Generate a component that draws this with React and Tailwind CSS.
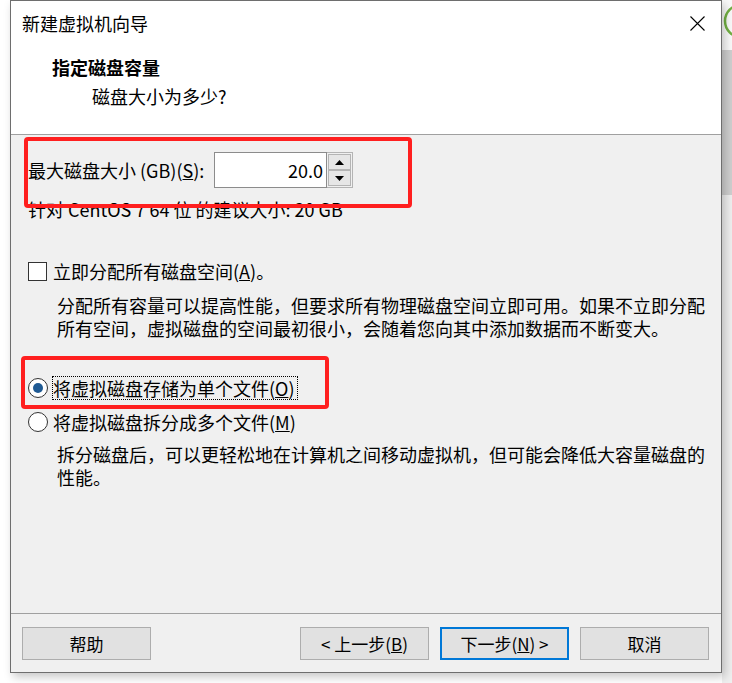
import React from 'react';

// 单选框
const Radio = ({ checked }) => (
  <span className="w-[20px] h-[20px] rounded-full border border-[#333333] bg-white flex items-center justify-center shrink-0">
    {checked && <span className="w-[10px] h-[10px] rounded-full bg-[#1f5a93]" />}
  </span>
);

const Btn = ({ children, primary }) => (
  <button
    type="button"
    className={
      primary
        ? 'w-[129px] h-[33px] bg-[#e1e1e1] border-2 border-[#0078d7] text-[17px] leading-none text-black'
        : 'w-[129px] h-[33px] bg-[#e1e1e1] border border-[#adadad] text-[17px] leading-none text-black'
    }
  >
    {children}
  </button>
);

const SpinArrow = ({ up }) => (
  <span className="flex-1 bg-[#e6e6e6] border border-[#b4b4b4] flex items-center justify-center">
    <svg width="9" height="5" viewBox="0 0 9 5">
      {up ? <path d="M0 5 L4.5 0 L9 5 Z" fill="#000" /> : <path d="M0 0 L4.5 5 L9 0 Z" fill="#000" />}
    </svg>
  </span>
);

export default function App() {
  return (
    <div className="relative w-[732px] h-[683px] bg-white overflow-hidden flex font-['Noto_Sans_CJK_SC',sans-serif] text-[18px] text-black">
      <div className="w-[10px] shrink-0" />

      {/* 对话框 */}
      <div className="relative z-10 w-[712px] h-[673px] shrink-0 border border-[#6e6e6e] bg-[#f0f0f0] flex flex-col shadow-[3px_4px_9px_rgba(0,0,0,0.22)]">
        {/* 头部 */}
        <div className="h-[133px] bg-white flex flex-col">
          <div className="flex items-center justify-between pl-[11px] pr-[16px] pt-[10px]">
            <span className="leading-[24px]">新建虚拟机向导</span>
            <svg width="15" height="15" viewBox="0 0 15 15">
              <path d="M0.5 0.5 L14.5 14.5 M14.5 0.5 L0.5 14.5" stroke="#000" strokeWidth="1.1" />
            </svg>
          </div>
          <p className="pl-[41px] mt-[20px] font-bold leading-[24px]">指定磁盘容量</p>
          <p className="pl-[81px] mt-[5px] leading-[24px]">磁盘大小为多少?</p>
        </div>
        <div className="h-px bg-[#a0a0a0]" />

        {/* 内容 */}
        <div className="flex-1 flex flex-col pl-[17px]">
          <div className="flex items-center mt-[17px]">
            <span className="leading-[24px] w-[186px]">
              最大磁盘大小 (GB)(<span className="underline">S</span>):
            </span>
            <div className="flex h-[36px]">
              <div className="w-[113px] bg-white border border-[#8c8c8c] flex items-center justify-end pr-[3px] leading-none">
                20.0
              </div>
              <div className="w-[26px] flex flex-col p-px border border-l-0 border-[#b4b4b4]">
                <SpinArrow up />
                <SpinArrow />
              </div>
            </div>
          </div>
          <p className="mt-[9px] leading-[24px]">针对 CentOS 7 64 位 的建议大小: 20 GB</p>

          <div className="flex items-center mt-[38px]">
            <span className="w-[19px] h-[19px] border border-[#333333] bg-white shrink-0" />
            <span className="ml-[6px] leading-[24px]">
              立即分配所有磁盘空间(<span className="underline">A</span>)。
            </span>
          </div>
          <div className="pl-[29px] mt-[11px] leading-[23px]">
            <p>分配所有容量可以提高性能，但要求所有物理磁盘空间立即可用。如果不立即分配</p>
            <p>所有空间，虚拟磁盘的空间最初很小，会随着您向其中添加数据而不断变大。</p>
          </div>

          <div className="flex items-center mt-[36px]">
            <Radio checked />
            <span className="ml-[4px] pr-[2px] border border-dotted border-black leading-[22px]">
              将虚拟磁盘存储为单个文件(<span className="underline">O</span>)
            </span>
          </div>
          <div className="flex items-center mt-[10px]">
            <Radio />
            <span className="ml-[5px] leading-[24px]">
              将虚拟磁盘拆分成多个文件(<span className="underline">M</span>)
            </span>
          </div>
          <div className="pl-[29px] mt-[9px] leading-[23px]">
            <p>拆分磁盘后，可以更轻松地在计算机之间移动虚拟机，但可能会降低大容量磁盘的</p>
            <p>性能。</p>
          </div>
        </div>

        {/* 底部按钮 */}
        <div className="h-px bg-[#a0a0a0]" />
        <div className="h-[58px] flex items-start pt-[13px] pl-[11px] pr-[12px]">
          <Btn>帮助</Btn>
          <div className="flex-1" />
          <div className="flex gap-[11px]">
            <Btn>&lt; 上一步(<span className="underline">B</span>)</Btn>
            <Btn primary>下一步(<span className="underline">N</span>) &gt;</Btn>
            <Btn>取消</Btn>
          </div>
        </div>
      </div>

      {/* 右侧背景 */}
      <div className="flex-1 flex flex-col">
        <div className="h-[50px] bg-[#fafafa]">
          <svg width="10" height="50" viewBox="0 0 10 50">
            <circle cx="19" cy="21" r="16" fill="none" stroke="#72b043" strokeWidth="2.5" />
          </svg>
        </div>
        <div className="h-[145px] bg-[#cfcfcf]" />
        <div className="flex-1 bg-[#efefef]" />
      </div>

      {/* 红色标注框 */}
      <div className="absolute z-20 left-[24px] top-[137px] w-[388px] h-[71px] border-4 border-[#ff1f1f] rounded-[4px]" />
      <div className="absolute z-20 left-[21px] top-[356px] w-[308px] h-[53px] border-4 border-[#ff1f1f] rounded-[4px]" />
    </div>
  );
}
